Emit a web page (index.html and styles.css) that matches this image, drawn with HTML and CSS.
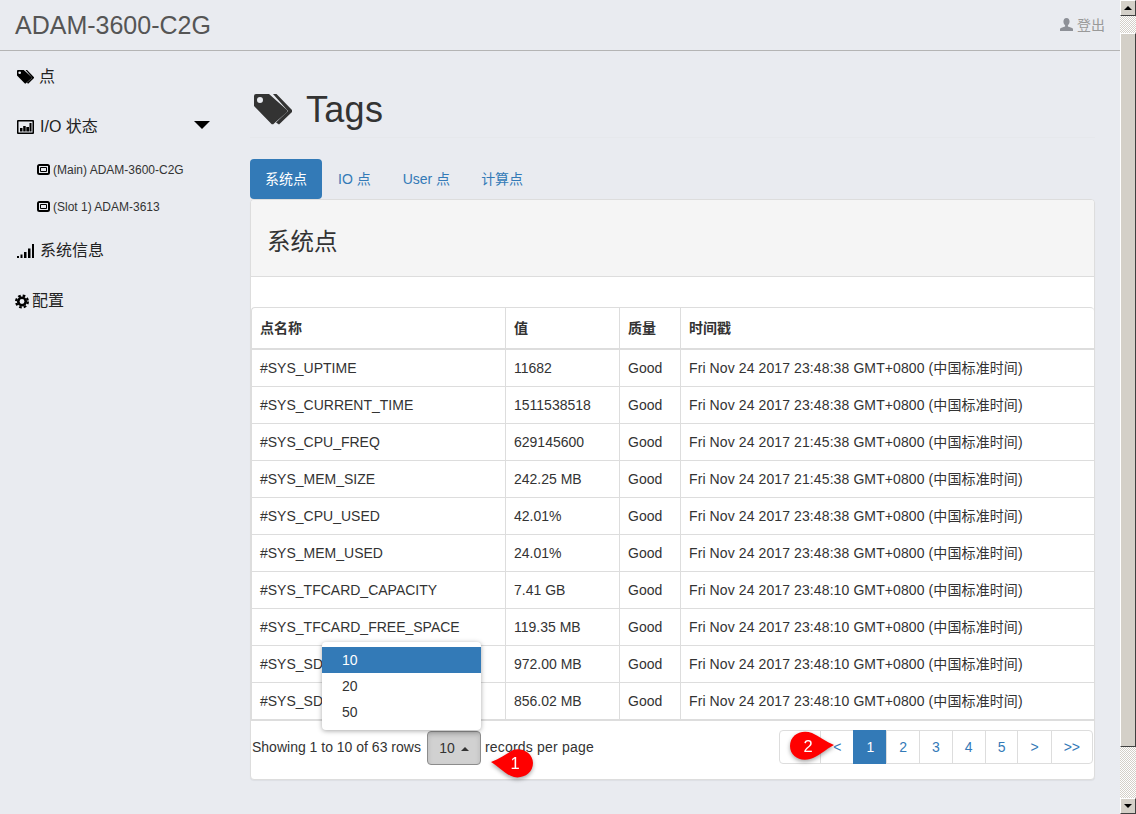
FILE: index.html
```html
<!DOCTYPE html>
<html lang="zh">
<head>
<meta charset="utf-8">
<title>ADAM-3600-C2G</title>
<link rel="stylesheet" href="styles.css">
</head>
<body>
<div class="page">
  <header class="navbar">
    <span class="brand">ADAM-3600-C2G</span>
    <a class="logout">
      <svg class="icon-user" viewBox="0 0 14 14"><path d="M7 0c2.200 0 3.300 1.700 3.300 3.800 0 1.700-.8 3.200-1.800 4v1.300c2 .5 4.500 1.300 5.500 2.400V14H0v-2.500c1-1.100 3.500-1.900 5.500-2.400V7.800c-1-.8-1.800-2.300-1.800-4C3.700 1.700 4.800 0 7 0z"/></svg>
      <span>登出</span>
    </a>
  </header>
  <div class="body-row">
    <nav class="sidebar">
      <a class="side-item side-item-tag">
        <svg class="icon-side" viewBox="0 0 38 31"><path fill-rule="evenodd" d="M2 0H15L32.500 15.500a2 2 0 0 1 0 3L20 29.500a2 2 0 0 1-3 0L0 12V2a2 2 0 0 1 2-2zM6 3a3 3 0 1 0 0 6 3 3 0 0 0 0-6z"/><path d="M19 0h3.500L37.500 15.500a2 2 0 0 1 0 3L25 30.500l-3-2L34 17z"/></svg>
        <span>点</span>
      </a>
      <a class="side-item">
        <svg class="icon-side" viewBox="0 0 17 14"><path fill-rule="evenodd" d="M1 0h15a1 1 0 0 1 1 1v12a1 1 0 0 1-1 1H1a1 1 0 0 1-1-1V1a1 1 0 0 1 1-1zM1.500 1.500v11h14v-11z"/><path d="M3 8h2.500v3.500H3zM6.200 6h2.500v5.500H6.200zM9.300 7H12v4.500H9.300zM12.500 3H14.500v8.500h-2z"/></svg>
        <span>I/O 状态</span>
        <i class="caret-big"></i>
      </a>
      <a class="side-sub">
        <svg class="icon-chip" viewBox="0 0 13 11"><path fill-rule="evenodd" d="M2.500 0h8A2.500 2.500 0 0 1 13 2.500v6a2.500 2.500 0 0 1-2.500 2.500h-8A2.500 2.500 0 0 1 0 8.500v-6A2.500 2.500 0 0 1 2.500 0zM2 2v7h9V2z"/><path class="chip-core" d="M3.500 3.500h6v4h-6z"/></svg>
        <span>(Main) ADAM-3600-C2G</span>
      </a>
      <a class="side-sub">
        <svg class="icon-chip" viewBox="0 0 13 11"><path fill-rule="evenodd" d="M2.500 0h8A2.500 2.500 0 0 1 13 2.500v6a2.500 2.500 0 0 1-2.500 2.500h-8A2.500 2.500 0 0 1 0 8.500v-6A2.500 2.500 0 0 1 2.500 0zM2 2v7h9V2z"/><path class="chip-core" d="M3.500 3.500h6v4h-6z"/></svg>
        <span>(Slot 1) ADAM-3613</span>
      </a>
      <a class="side-item">
        <svg class="icon-side" viewBox="0 0 17 14"><path d="M0 12h2v2H0zM3.500 10.500h2V14h-2zM7 8h2.500v6H7zM11 4.500h2.500V14H11zM15 0h2v14h-2z"/></svg>
        <span>系统信息</span>
      </a>
      <a class="side-item side-item-tight">
        <svg class="icon-cog" viewBox="0 0 16 16"><circle cx="8" cy="8" r="4.300" fill="none" stroke="#000" stroke-width="3"/><circle cx="8" cy="8" r="6.700" fill="none" stroke="#000" stroke-width="2.600" stroke-dasharray="3 2.260"/></svg>
        <span>配置</span>
      </a>
    </nav>
    <main class="content">
      <h1 class="page-title">
        <svg class="icon-title" viewBox="0 0 38 31"><path fill-rule="evenodd" d="M2 0H15L32.500 15.500a2 2 0 0 1 0 3L20 29.500a2 2 0 0 1-3 0L0 12V2a2 2 0 0 1 2-2zM6 3a3 3 0 1 0 0 6 3 3 0 0 0 0-6z"/><path d="M19 0h3.500L37.500 15.500a2 2 0 0 1 0 3L25 30.500l-3-2L34 17z"/></svg>
        <span class="page-title-text">Tags</span>
      </h1>
      <ul class="tabs">
        <li class="tab tab-active">系统点</li>
        <li class="tab">IO 点</li>
        <li class="tab">User 点</li>
        <li class="tab tab-last">计算点</li>
      </ul>
      <section class="panel">
        <div class="panel-heading">系统点</div>
        <div class="panel-body">
          <div class="table-wrap">
            <table class="tag-table">
              <colgroup><col class="col-name"><col class="col-value"><col class="col-quality"><col class="col-time"></colgroup>
              <thead>
                <tr><th>点名称</th><th>值</th><th>质量</th><th>时间戳</th></tr>
              </thead>
              <tbody>
                <tr><td>#SYS_UPTIME</td><td>11682</td><td>Good</td><td>Fri Nov 24 2017 23:48:38 GMT+0800 (中国标准时间)</td></tr>
                <tr><td>#SYS_CURRENT_TIME</td><td>1511538518</td><td>Good</td><td>Fri Nov 24 2017 23:48:38 GMT+0800 (中国标准时间)</td></tr>
                <tr><td>#SYS_CPU_FREQ</td><td>629145600</td><td>Good</td><td>Fri Nov 24 2017 21:45:38 GMT+0800 (中国标准时间)</td></tr>
                <tr><td>#SYS_MEM_SIZE</td><td>242.25 MB</td><td>Good</td><td>Fri Nov 24 2017 21:45:38 GMT+0800 (中国标准时间)</td></tr>
                <tr><td>#SYS_CPU_USED</td><td>42.01%</td><td>Good</td><td>Fri Nov 24 2017 23:48:38 GMT+0800 (中国标准时间)</td></tr>
                <tr><td>#SYS_MEM_USED</td><td>24.01%</td><td>Good</td><td>Fri Nov 24 2017 23:48:38 GMT+0800 (中国标准时间)</td></tr>
                <tr><td>#SYS_TFCARD_CAPACITY</td><td>7.41 GB</td><td>Good</td><td>Fri Nov 24 2017 23:48:10 GMT+0800 (中国标准时间)</td></tr>
                <tr><td>#SYS_TFCARD_FREE_SPACE</td><td>119.35 MB</td><td>Good</td><td>Fri Nov 24 2017 23:48:10 GMT+0800 (中国标准时间)</td></tr>
                <tr><td>#SYS_SDCARD_CAPACITY</td><td>972.00 MB</td><td>Good</td><td>Fri Nov 24 2017 23:48:10 GMT+0800 (中国标准时间)</td></tr>
                <tr><td>#SYS_SDCARD_FREE_SPACE</td><td>856.02 MB</td><td>Good</td><td>Fri Nov 24 2017 23:48:10 GMT+0800 (中国标准时间)</td></tr>
              </tbody>
            </table>
          </div>
          <div class="table-footer">
            <div class="page-info">
              <span>Showing 1 to 10 of 63 rows</span>
              <div class="size-select">
                <button class="size-btn">10 <i class="caret-up"></i></button>
                <ul class="size-menu">
                  <li class="size-option size-option-active">10</li>
                  <li class="size-option">20</li>
                  <li class="size-option">50</li>
                </ul>
                <svg class="callout callout-one" viewBox="0 0 50 36"><path d="M2 14 C10 11 17 6 24 2 C33 -1 44 5 44 15 C44 25 34 31 25 29 C17 27 9 18 2 14z"/><text x="26" y="21">1</text></svg>
              </div>
              <span class="info-records">records per page</span>
            </div>
            <ul class="pagination">
              <li class="page-item">&lt;&lt;</li>
              <li class="page-item">&lt;</li>
              <li class="page-item page-item-active">1</li>
              <li class="page-item">2</li>
              <li class="page-item">3</li>
              <li class="page-item">4</li>
              <li class="page-item">5</li>
              <li class="page-item">&gt;</li>
              <li class="page-item">&gt;&gt;</li>
            </ul>
            <svg class="callout callout-two" viewBox="0 0 50 36"><path d="M46 15 C38 12 31 6 24 3 C13 -1 2 5 2 16 C2 26 12 32 22 29 C30 27 38 19 46 15z"/><text x="20" y="22">2</text></svg>
          </div>
        </div>
      </section>
    </main>
  </div>
</div>
<aside class="scrollbar">
  <div class="sb-btn"><i class="sb-arrow-up"></i></div>
  <div class="sb-track sb-track-top"></div>
  <div class="sb-thumb"></div>
  <div class="sb-track sb-track-fill"></div>
  <div class="sb-btn"><i class="sb-arrow-down"></i></div>
</aside>
</body>
</html>
```
FILE: styles.css
```css
* { box-sizing: border-box; }
html, body { height: 100%; margin: 0; }
body {
  display: flex;
  height: 814px;
  overflow: hidden;
  background: #e9ebf0;
  color: #333;
  font: 14px/20px "Liberation Sans", "Noto Sans CJK SC", sans-serif;
}
ul { list-style: none; margin: 0; padding: 0; }

.page { flex: 1; min-width: 0; display: flex; flex-direction: column; }

.navbar {
  height: 51px;
  flex: none;
  display: flex;
  align-items: center;
  justify-content: space-between;
  padding: 0 15px;
  border-bottom: 1px solid #b4b4b4;
}
.brand { font-size: 25px; color: #555; line-height: 50px; }
.logout { display: flex; align-items: center; gap: 4px; color: #999; }
.icon-user { width: 13px; height: 13px; fill: #8d9097; margin-top: -2px; }

.body-row { display: flex; flex: 1; min-height: 0; }

.sidebar { width: 250px; flex: none; color: #111; }
.side-item {
  display: flex;
  align-items: center;
  height: 50px;
  padding: 2px 40px 0 17px;
  font-size: 16px;
  gap: 6px;
  color: #222;
}
.side-item-tag { gap: 5px; }
.side-item-tight { padding-left: 15px; gap: 3px; }
.side-sub {
  display: flex;
  align-items: center;
  height: 37px;
  padding-left: 37px;
  gap: 3px;
  font-size: 12px;
  color: #333;
}
.icon-side { width: 17px; height: 14px; flex: none; fill: #000; }
.icon-chip { width: 13px; height: 11px; flex: none; fill: #000; }
.chip-core { fill: none; stroke: #000; stroke-width: 1; }
.icon-cog { width: 14px; height: 15px; flex: none; }
.caret-big {
  margin-left: auto;
  border-left: 8px solid transparent;
  border-right: 8px solid transparent;
  border-top: 8px solid #000;
  margin-top: -4px;
}

.content { width: 845px; flex: none; }
.page-title {
  display: flex;
  align-items: center;
  gap: 14px;
  margin: 0;
  height: 87px;
  padding: 30px 0 0 4px;
  font-size: 36px;
  font-weight: 500;
  line-height: 40px;
  letter-spacing: .3px;
  color: #333;
  border-bottom: 1px solid #e6e8ec;
}
.page-title-text { padding-top: 2px; }
.icon-title { width: 38px; height: 31px; fill: #333; }

.tabs { display: flex; gap: 2px; margin-top: 21px; }
.tab { padding: 10px 15px; color: #337ab7; border-radius: 4px; }
.tab-active { background: #337ab7; color: #fff; margin-right: -1px; }
.tab-last { margin-left: -1px; }

.panel {
  background: #fff;
  border: 1px solid #ddd;
  border-radius: 4px;
  height: 581px;
  box-shadow: 0 1px 1px rgba(0, 0, 0, .05);
}
.panel-heading {
  height: 77px;
  padding: 8px 16px 0;
  display: flex;
  align-items: center;
  font-size: 23.500px;
  background: #f5f5f5;
  border-bottom: 1px solid #ddd;
  border-radius: 3px 3px 0 0;
}
.panel-body { padding-top: 30px; }

.table-wrap { border: 1px solid #ddd; border-bottom: 0; border-radius: 4px 4px 0 0; border-right: 0; }
.tag-table { width: 100%; table-layout: fixed; border-collapse: separate; border-spacing: 0; }
.col-name { width: 253px; }
.col-value { width: 114px; }
.col-quality { width: 61px; }
.tag-table th {
  height: 42px;
  padding: 8px;
  text-align: left;
  font-weight: 700;
  border-bottom: 2px solid #ddd;
  border-left: 1px solid #ddd;
}
.tag-table td {
  height: 37px;
  padding: 8px;
  border-bottom: 1px solid #ddd;
  border-left: 1px solid #ddd;
  white-space: nowrap;
}
.tag-table td:last-child { letter-spacing: .1px; }
.tag-table th:first-child, .tag-table td:first-child { border-left: 0; }
.tag-table tbody tr:last-child td { border-bottom-width: 2px; height: 38px; }

.table-footer {
  position: relative;
  display: flex;
  justify-content: space-between;
  align-items: center;
  padding: 8px 1px 0 1px;
}
.page-info { display: flex; align-items: center; gap: 5px; }
.info-records { letter-spacing: .2px; }
.size-select { position: relative; margin: 0 -1px 0 1px; }
.size-btn {
  display: block;
  width: 54px;
  height: 34px;
  margin-top: 2px;
  padding: 0;
  font: inherit;
  color: #333;
  background: #d1d1d1;
  border: 1px solid #8c8c8c;
  border-radius: 4px;
  box-shadow: inset 0 3px 5px rgba(0, 0, 0, .125);
}
.caret-up {
  display: inline-block;
  vertical-align: middle;
  margin-left: 2px;
  border-left: 4px solid transparent;
  border-right: 4px solid transparent;
  border-bottom: 4px solid #333;
}
.size-menu {
  position: absolute;
  right: 0;
  bottom: 35px;
  width: 159px;
  padding: 5px 0;
  background: #fff;
  border-radius: 4px;
  box-shadow: 0 1px 5px rgba(0, 0, 0, .35);
  z-index: 5;
}
.size-option { height: 26px; padding: 3px 20px; }
.size-option-active { background: #337ab7; color: #fff; }

.pagination { display: flex; height: 34px; }
.page-item {
  padding: 6px 12px;
  margin-left: -1px;
  color: #337ab7;
  background: #fff;
  border: 1px solid #ddd;
}
.page-item:first-child { border-radius: 4px 0 0 4px; }
.page-item:last-child { border-radius: 0 4px 4px 0; }
.page-item-active { background: #337ab7; color: #fff; border-color: #337ab7; }

.callout {
  position: absolute;
  width: 50px;
  height: 36px;
  overflow: visible;
  z-index: 6;
  filter: drop-shadow(0 2px 2px rgba(0, 0, 0, .35));
}
.callout path { fill: #f00; }
.callout text { fill: #fff; font-size: 16.500px; text-anchor: middle; }
.callout-one { left: 62px; top: 19px; }
.callout-two { left: 537px; top: 9px; }

.scrollbar { width: 16px; flex: none; height: 814px; display: flex; flex-direction: column; }
.sb-btn, .sb-thumb {
  background: #d4d0c8;
  border: 1px solid;
  border-color: #fff #404040 #404040 #fff;
}
.sb-btn { height: 16px; flex: none; display: flex; align-items: center; justify-content: center; }
.sb-arrow-up { border: 4px solid transparent; border-top: 0; border-bottom-color: #000; }
.sb-arrow-down { border: 4px solid transparent; border-bottom: 0; border-top-color: #000; }
.sb-track { background: repeating-conic-gradient(#d4d0c8 0 25%, #fff 0 50%) 0 0 / 2px 2px; }
.sb-track-top { height: 17px; flex: none; }
.sb-thumb { height: 714px; flex: none; }
.sb-track-fill { flex: 1; }
```
